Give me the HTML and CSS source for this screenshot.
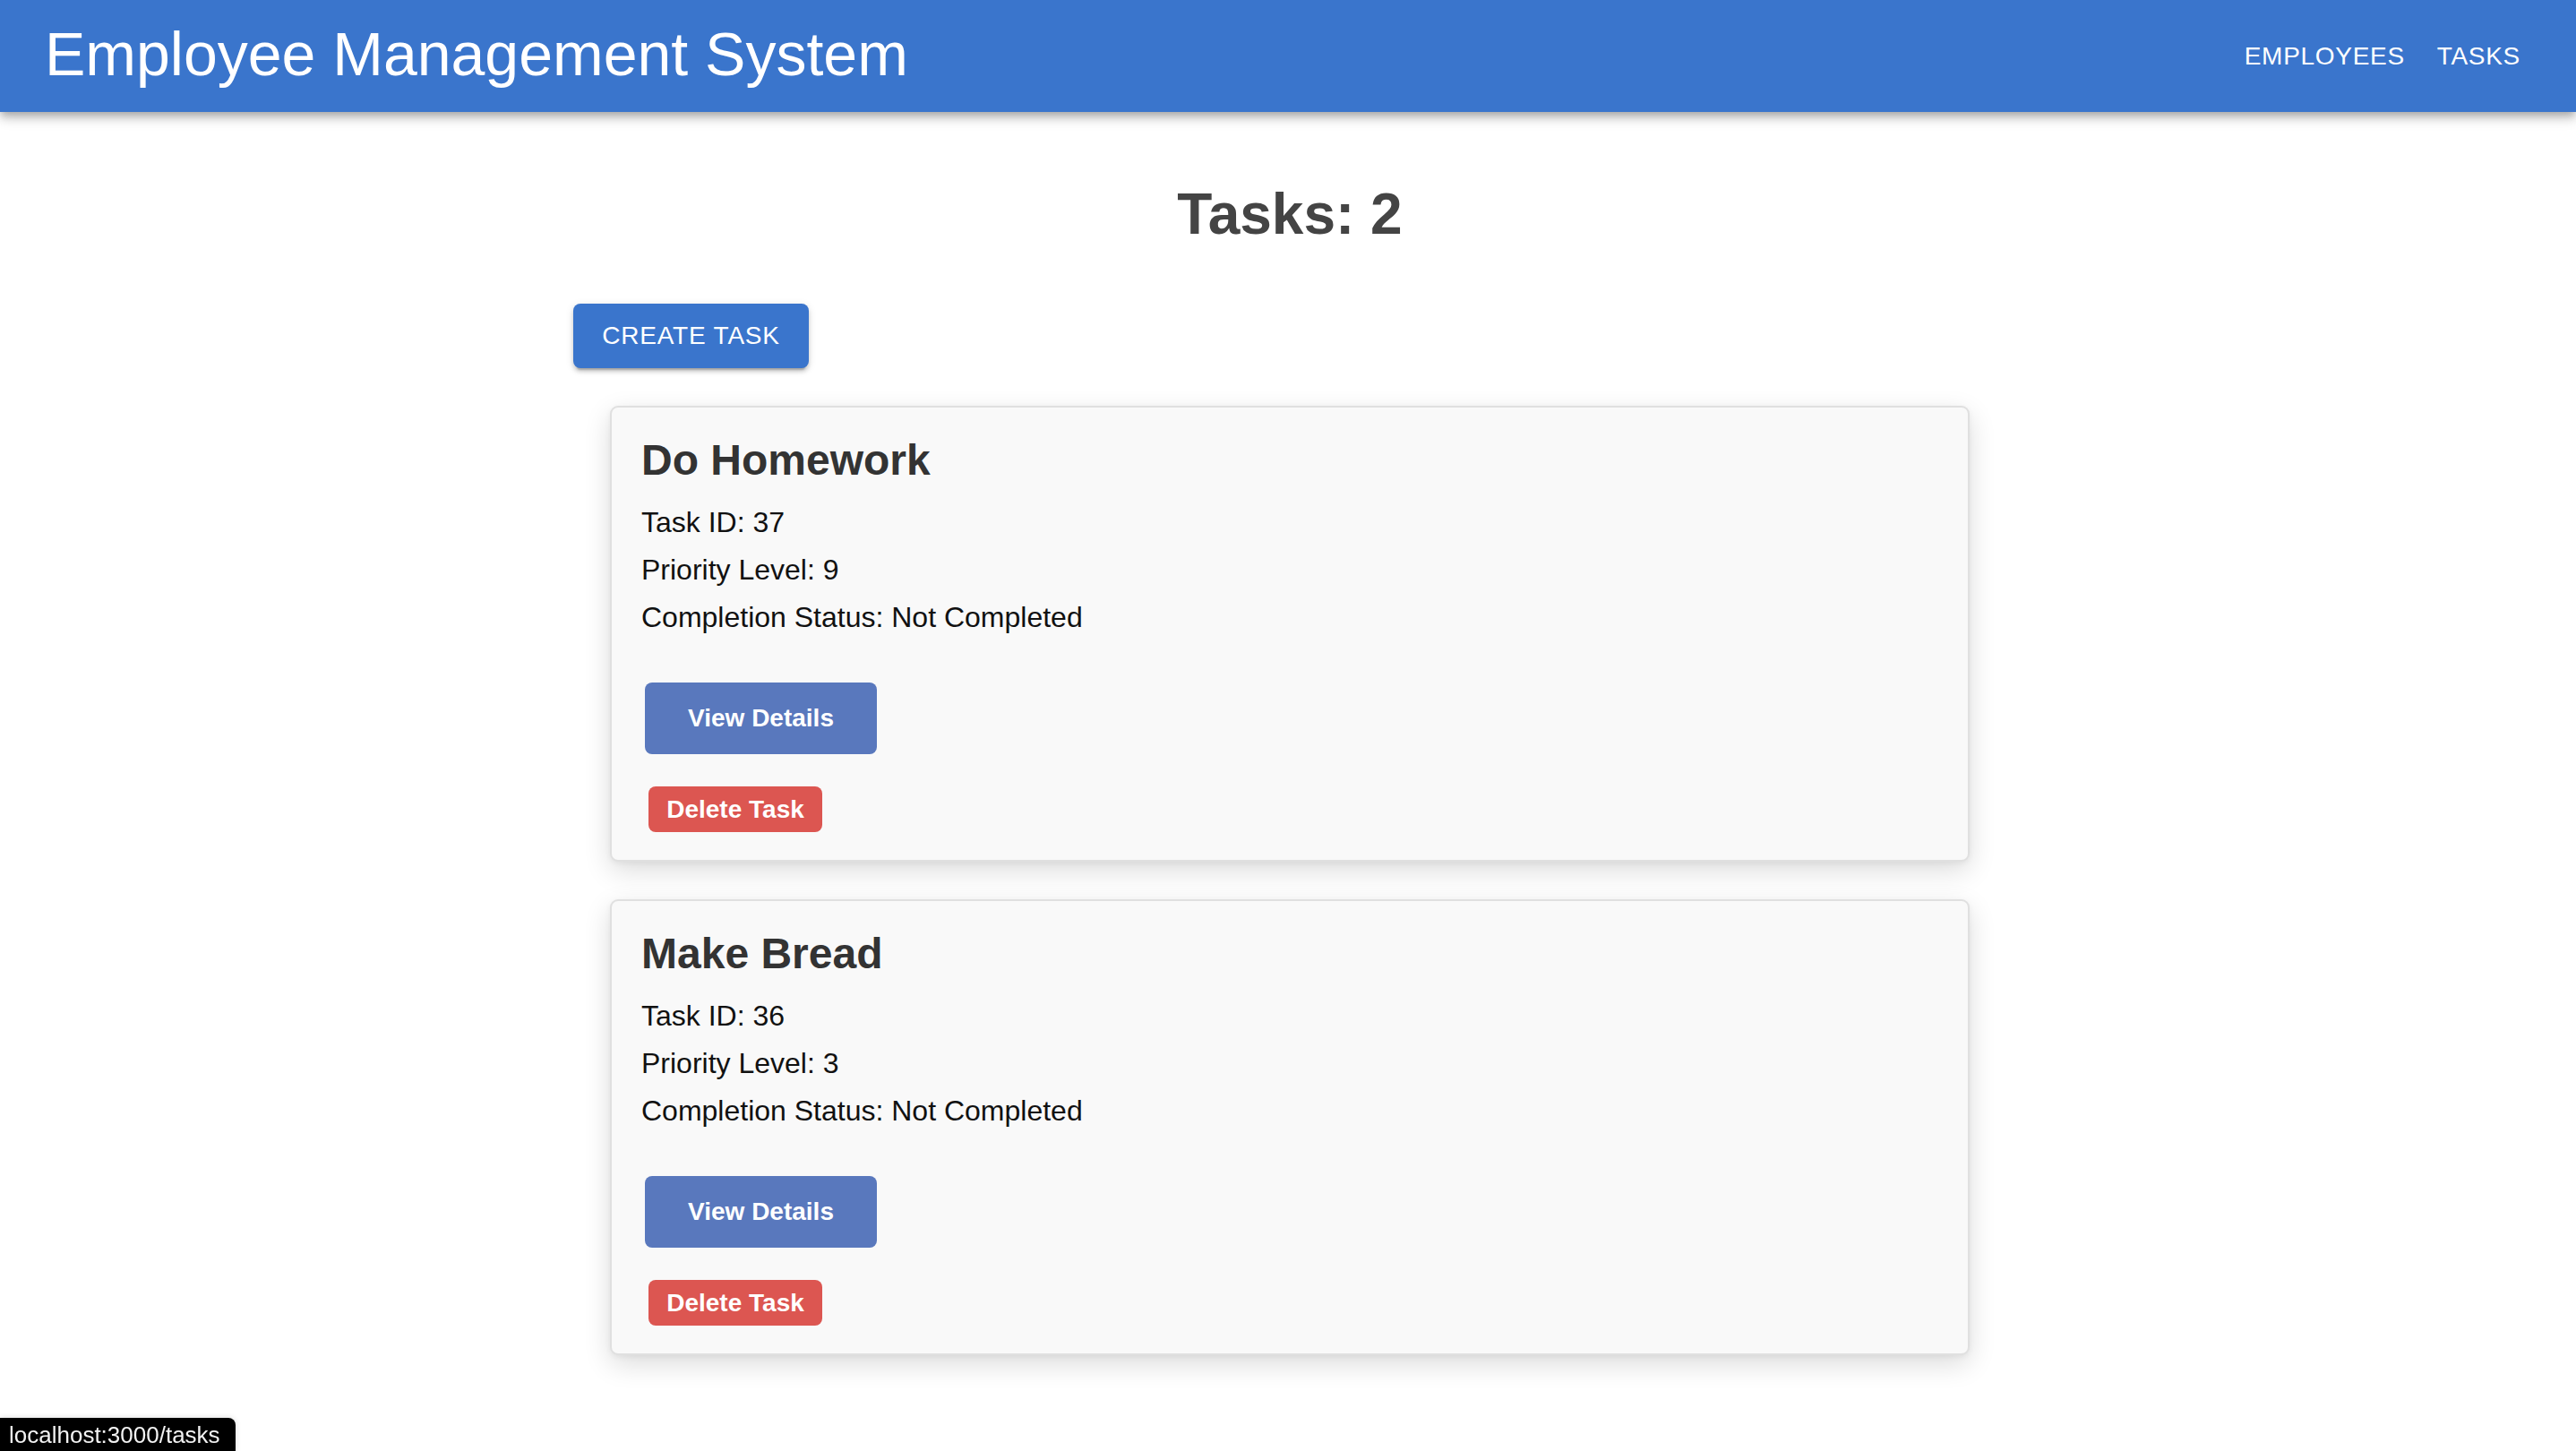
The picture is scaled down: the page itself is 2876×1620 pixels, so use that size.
FILE: index.html
```html
<!DOCTYPE html>
<html lang="en">
<head>
<meta charset="utf-8">
<title>Employee Management System</title>
<link rel="stylesheet" href="styles.css">
</head>
<body>
<header class="appbar">
  <h1 class="brand">Employee Management System</h1>
  <nav class="nav">
    <a class="nav-link" href="#">EMPLOYEES</a>
    <a class="nav-link" href="#">TASKS</a>
  </nav>
</header>
<main class="page">
  <h2 class="page-title">Tasks: 2</h2>
  <div class="container">
    <button class="btn-create">CREATE TASK</button>
    <div class="task-list">
      <div class="task-card">
        <h3 class="task-name">Do Homework</h3>
        <p class="task-line">Task ID: 37</p>
        <p class="task-line">Priority Level: 9</p>
        <p class="task-line">Completion Status: Not Completed</p>
        <div class="actions">
          <button class="btn-view">View Details</button>
          <button class="btn-delete">Delete Task</button>
        </div>
      </div>
      <div class="task-card">
        <h3 class="task-name">Make Bread</h3>
        <p class="task-line">Task ID: 36</p>
        <p class="task-line">Priority Level: 3</p>
        <p class="task-line">Completion Status: Not Completed</p>
        <div class="actions">
          <button class="btn-view">View Details</button>
          <button class="btn-delete">Delete Task</button>
        </div>
      </div>
    </div>
  </div>
</main>
<div class="status-bar">localhost:3000/tasks</div>
</body>
</html>
```
FILE: styles.css
```css
html, body {
  margin: 0;
  padding: 0;
  background: #ffffff;
  font-family: "Liberation Sans", Arial, Helvetica, sans-serif;
}

.appbar {
  position: relative;
  z-index: 2;
  height: 125px;
  box-sizing: border-box;
  padding: 0 46px 0 50px;
  background: #3a75cc;
  display: flex;
  align-items: center;
  justify-content: space-between;
  box-shadow: 0 4px 8px -2px rgba(0,0,0,0.2), 0 8px 10px 0 rgba(0,0,0,0.14), 0 2px 20px 0 rgba(0,0,0,0.12);
}

.brand {
  margin: 0 0 6px 0;
  font-size: 68px;
  font-weight: 400;
  color: #ffffff;
  line-height: 76px;
}

.nav {
  display: flex;
  gap: 4px;
}

.nav-link {
  display: block;
  padding: 12px 16px;
  font-size: 28px;
  letter-spacing: 0.7px;
  line-height: 32px;
  color: #ffffff;
  text-decoration: none;
}

.page {
  padding: 0 0 0 4px;
}

.page-title {
  margin: 77px 0 0 0;
  text-align: center;
  font-size: 64px;
  font-weight: 700;
  line-height: 74px;
  color: #444444;
}

.container {
  width: 1600px;
  margin: 0 auto;
}

.btn-create {
  display: block;
  margin-top: 63px;
  width: 263px;
  height: 72px;
  padding: 0;
  border: none;
  border-radius: 8px;
  background: #3a75cc;
  color: #ffffff;
  font-family: "Liberation Sans", Arial, sans-serif;
  font-size: 28px;
  letter-spacing: 0.8px;
  font-weight: 400;
  box-shadow: 0 6px 2px -4px rgba(0,0,0,0.2), 0 4px 4px 0 rgba(0,0,0,0.14), 0 2px 10px 0 rgba(0,0,0,0.12);
}

.task-list {
  display: flex;
  flex-direction: column;
  gap: 42px;
  padding: 42px 41px;
}

.task-card {
  border: 2px solid #e0e0e0;
  border-radius: 9px;
  background: #f9f9f9;
  padding: 31px 33px;
  box-shadow: 0 10px 30px rgba(0,0,0,0.14), 0 2px 6px rgba(0,0,0,0.05);
}

.task-name {
  margin: 0 0 24px 0;
  font-size: 48px;
  font-weight: 700;
  line-height: 55px;
  color: #333333;
}

.task-line {
  margin: 0 0 16px 0;
  font-size: 32px;
  line-height: 37px;
  color: #111111;
}

.task-line:last-of-type {
  margin-bottom: 0;
}

.actions {
  margin-top: 54px;
  display: flex;
  flex-direction: column;
  align-items: flex-start;
}

.btn-view {
  margin-left: 4px;
  width: 259px;
  height: 80px;
  padding: 0;
  border: none;
  border-radius: 8px;
  background: #5978bd;
  color: #ffffff;
  font-family: "Liberation Sans", Arial, sans-serif;
  font-size: 28px;
  font-weight: 700;
}

.btn-delete {
  margin-left: 8px;
  margin-top: 36px;
  width: 194px;
  height: 51px;
  padding: 0;
  border: none;
  border-radius: 8px;
  background: #dc5651;
  color: #ffffff;
  font-family: "Liberation Sans", Arial, sans-serif;
  font-size: 28px;
  font-weight: 700;
}

.status-bar {
  position: fixed;
  left: 0;
  bottom: 0;
  height: 37px;
  box-sizing: border-box;
  padding: 2px 17px 0 10px;
  background: #000000;
  color: #f2f2f2;
  font-size: 26px;
  line-height: 35px;
  border-top-right-radius: 8px;
  box-shadow: 0 0 6px rgba(0,0,0,0.15);
}
```
